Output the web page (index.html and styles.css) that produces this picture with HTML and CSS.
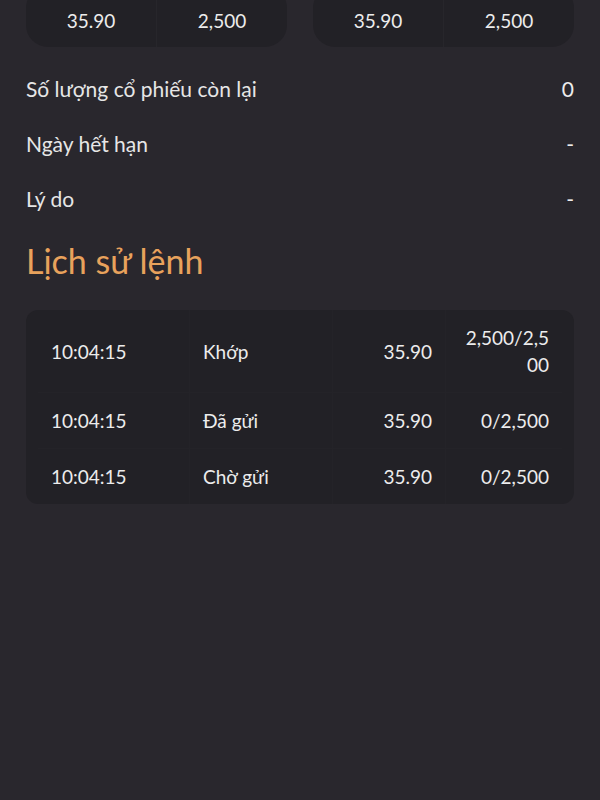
FILE: index.html
```html
<!DOCTYPE html>
<html lang="vi">
<head>
  <meta charset="UTF-8" />
  <meta name="viewport" content="width=device-width, initial-scale=1.0"/>
  <title>Chi tiết lệnh</title>
  <link rel="stylesheet" href="styles.css">
</head>
<body>
  <div class="page">
    <div class="price-cards">
      <div class="price-card">
        <div class="price-cell">35.90</div>
        <div class="price-cell">2,500</div>
      </div>
      <div class="price-card">
        <div class="price-cell">35.90</div>
        <div class="price-cell">2,500</div>
      </div>
    </div>

    <div class="info-list">
      <div class="info-row">
        <span class="info-label">Số lượng cổ phiếu còn lại</span>
        <span class="info-value">0</span>
      </div>
      <div class="info-row">
        <span class="info-label">Ngày hết hạn</span>
        <span class="info-value">-</span>
      </div>
      <div class="info-row">
        <span class="info-label">Lý do</span>
        <span class="info-value">-</span>
      </div>
    </div>

    <h2 class="section-title">Lịch sử lệnh</h2>

    <div class="history">
      <div class="history-row">
        <div class="cell">10:04:15</div>
        <div class="cell">Khớp</div>
        <div class="cell num">35.90</div>
        <div class="cell num">2,500/2,500</div>
      </div>
      <div class="history-row">
        <div class="cell">10:04:15</div>
        <div class="cell">Đã gửi</div>
        <div class="cell num">35.90</div>
        <div class="cell num">0/2,500</div>
      </div>
      <div class="history-row">
        <div class="cell">10:04:15</div>
        <div class="cell">Chờ gửi</div>
        <div class="cell num">35.90</div>
        <div class="cell num">0/2,500</div>
      </div>
    </div>
  </div>
</body>
</html>
```

FILE: styles.css
```css
html, body {
  margin: 0;
  background: #29272d;
}

body {
  font-family: Lato, "Noto Sans", sans-serif;
  color: #ececec;
  height: 800px;
  overflow: hidden;
}

.page {
  padding: 0 26px;
}

.price-cards {
  display: flex;
  gap: 26px;
  margin-top: -14px;
}

.price-card {
  flex: 1;
  display: flex;
  background: #222126;
  border-radius: 22px;
  height: 61px;
}

.price-cell {
  flex: 1;
  display: flex;
  align-items: center;
  justify-content: center;
  font-size: 19px;
  padding-top: 7px;
}

.price-cell + .price-cell {
  border-left: 1px solid #27262b;
}

.info-list {
  margin-top: 14px;
}

.info-row {
  display: flex;
  justify-content: space-between;
  align-items: center;
  height: 55px;
  font-size: 21px;
}

.info-label {
  color: #e6e6e6;
}

.section-title {
  margin: 11px 0 0;
  font-weight: 400;
  font-size: 34px;
  color: #e8a25c;
  line-height: 48px;
}

.history {
  margin-top: 25px;
  background: #222126;
  border-radius: 12px;
  padding: 0 12px;
}

.history-row {
  display: grid;
  grid-template-columns: 151px 143px 113px 1fr;
}

.cell {
  padding: 14px 13px;
  font-size: 19px;
  line-height: 27px;
  display: flex;
  align-items: center;
  word-break: break-all;
}

.cell + .cell {
  border-left: 1px solid #242328;
}

.history-row + .history-row .cell {
  border-top: 1px solid #242328;
}

.num {
  justify-content: flex-end;
  text-align: right;
}
```
